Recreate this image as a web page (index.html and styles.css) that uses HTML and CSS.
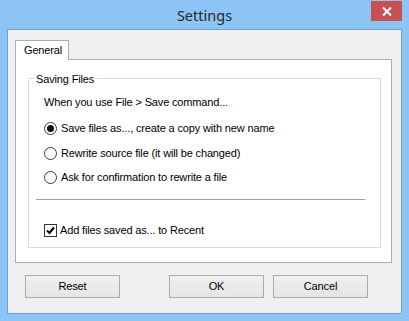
FILE: index.html
```html
<!DOCTYPE html>
<html>
  <head>
    <link rel="stylesheet" href="styles.css">
  </head>
  <body>
    <div class="window">
      <div class="titlebar">
        <span></span>
        <div class="title">Settings</div>
        <div class="close">
          <svg width="10" height="9" viewBox="0 0 10 9"><path d="M1 0.5 L9 8.5 M9 0.5 L1 8.5" stroke="#fff" stroke-width="2" fill="none"/></svg>
        </div>
      </div>
      <div class="client">
        <div class="tabs"><div class="tab">General</div></div>
        <div class="panel">
          <div class="group">
            <div class="legend">Saving Files</div>
            <div class="row heading">When you use File &gt; Save command...</div>
            <div class="row option first"><span class="radio on"></span>Save files as..., create a copy with new name</div>
            <div class="row option second"><span class="radio"></span>Rewrite source file (it will be changed)</div>
            <div class="row option third"><span class="radio"></span>Ask for confirmation to rewrite a file</div>
            <div class="sep"></div>
            <div class="row option checkrow">
              <span class="check"><svg width="11" height="11" viewBox="0 0 11 11"><path d="M2 5.5 L4.5 8 L9 2.5" stroke="#000" stroke-width="2" fill="none"/></svg></span>Add files saved as... to Recent
            </div>
          </div>
        </div>
        <div class="buttons">
          <div class="btn">Reset</div>
          <div class="btn ok">OK</div>
          <div class="btn cancel">Cancel</div>
        </div>
      </div>
    </div>
  </body>
</html>
```
FILE: styles.css
```css
body {margin: 0; background-color: #8cc4f6}

.window {width: 409px; height: 321px; background-color: #8cc4f6; box-sizing: border-box}

.titlebar {display: grid; grid-template-columns: 1fr auto 1fr; height: 29px}
.title {font-family: "Noto Sans", "Open Sans", sans-serif; font-size: 14.5px; line-height: 30px; color: #262626}
.close {justify-self: end; align-self: start; margin-top: 1px; margin-right: 7px; width: 31px; height: 20px; background-color: #c75050; display: flex; align-items: center; justify-content: center}

.client {
  margin-left: 7px;
  width: 395px;
  height: 285px;
  box-sizing: border-box;
  border: 1px solid #6f9fd4;
  background-color: #f0f0f0;
  padding: 10px 0 0 7px;
  font-family: "Liberation Sans", Arial, sans-serif;
  font-size: 11px;
  letter-spacing: -0.15px;
  color: #000
}

.tabs {display: flex}
.tab {width: 54px; height: 20px; box-sizing: border-box; border: 1px solid #adadad; border-bottom: none; background-color: #fff; margin-bottom: -1px; padding-left: 8px; line-height: 18px; position: relative; z-index: 1}

.panel {width: 377px; height: 204px; box-sizing: border-box; border: 1px solid #adadad; background-color: #fff; padding: 18px 0 0 12px}

.group {display: flex; flex-direction: column; width: 353px; height: 170px; box-sizing: border-box; border: 1px solid #dcdcdc; padding: 0 0 0 15px}
.legend {align-self: flex-start; margin: -8px 0 0 -10px; padding: 0 2px; height: 16px; line-height: 16px; background-color: #fff}

.row {height: 16px; line-height: 16px; display: flex; align-items: center; white-space: nowrap}
.heading {margin-top: 7px}
.first {margin-top: 10px}
.second {margin-top: 9px}
.third {margin-top: 8px}
.checkrow {margin-top: 22px}

.radio {width: 13px; height: 13px; box-sizing: border-box; border-radius: 50%; border: 1px solid #3a3a3a; background-color: #fff; margin-right: 4px; display: flex; align-items: center; justify-content: center}
.radio.on::after {content: ""; width: 7px; height: 7px; border-radius: 50%; background-color: #111}
.check {width: 13px; height: 13px; box-sizing: border-box; border: 1px solid #333; background-color: #fff; margin-right: 3px; display: flex; align-items: center; justify-content: center}

.sep {height: 1px; background-color: #a0a0a0; margin: 14px 15px 0 -8px}

.buttons {display: flex; margin: 12px 0 0 10px}
.btn {width: 95px; height: 23px; box-sizing: border-box; border: 1px solid #acacac; background: linear-gradient(#f0f0f0, #e5e5e5); text-align: center; line-height: 21px}
.ok {margin-left: 49px}
.cancel {margin-left: 9px}
```
